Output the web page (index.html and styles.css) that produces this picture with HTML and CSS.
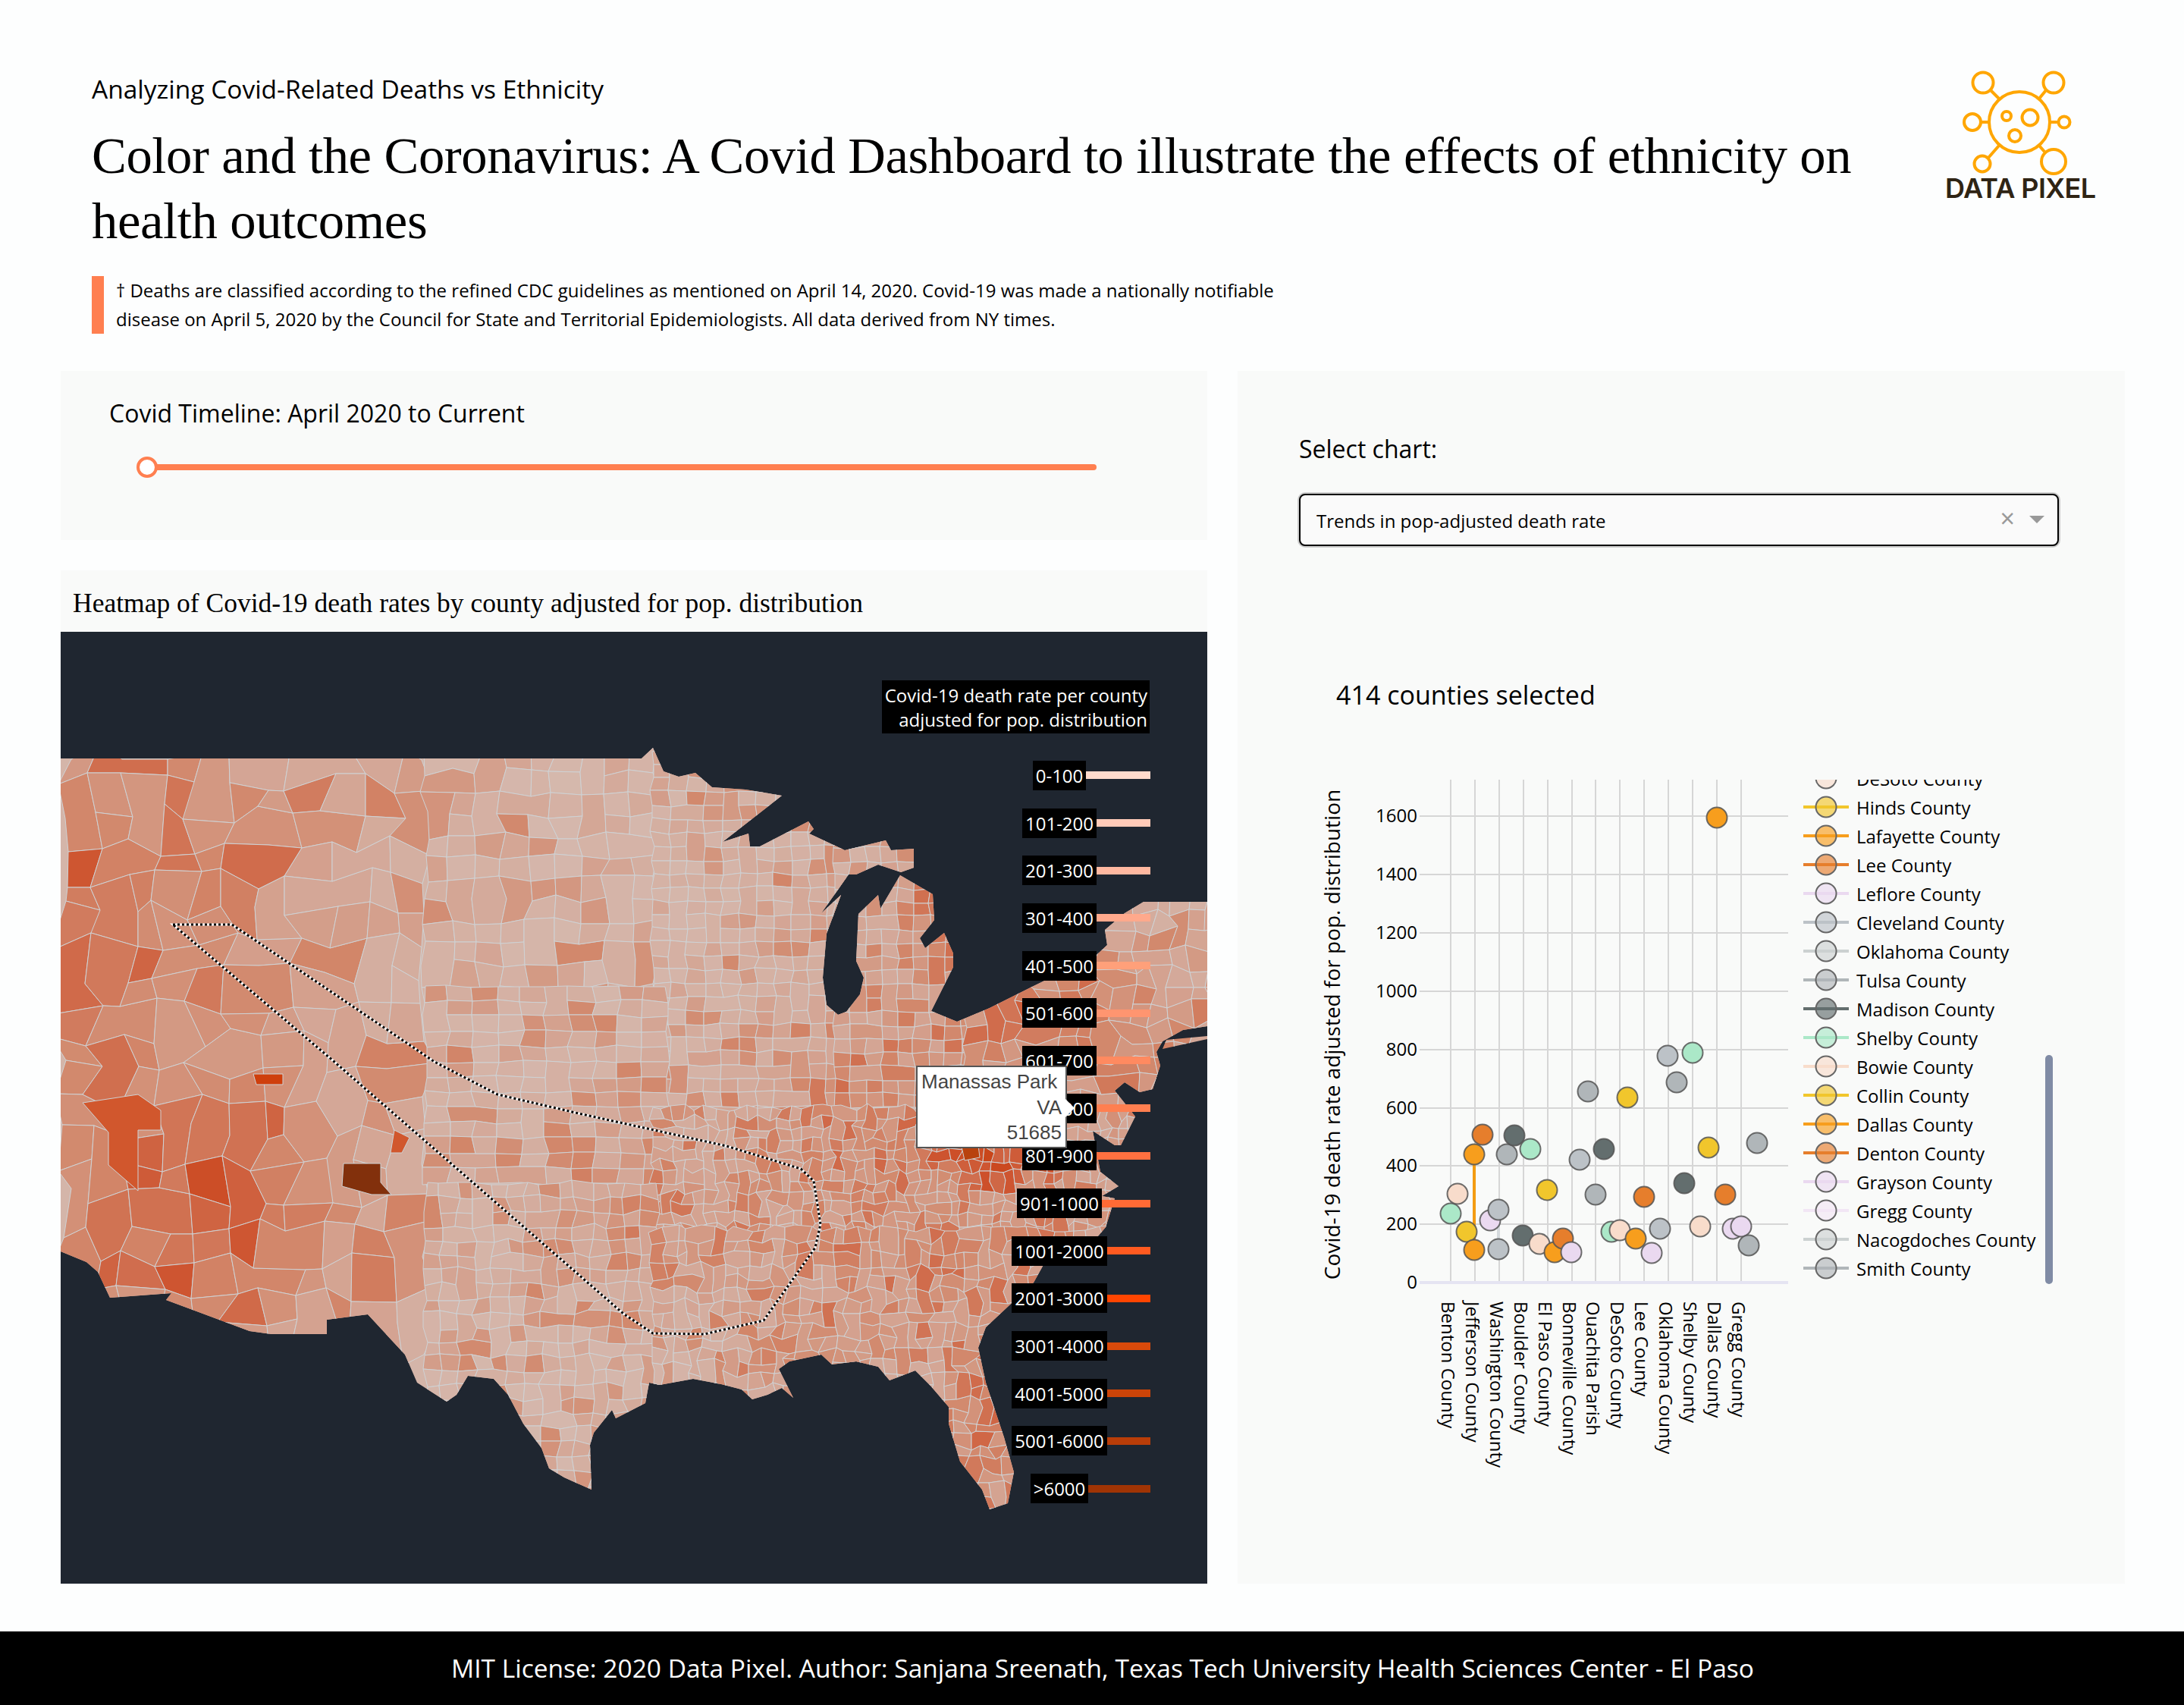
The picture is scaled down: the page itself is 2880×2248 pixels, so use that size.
FILE: index.html
```html
<!DOCTYPE html>
<html lang="en">
<head>
    <meta charset="UTF-8">
    <title>Color and the Coronavirus</title>
    <link rel="stylesheet" href="styles.css">
</head>
<body>
    <svg class="defs" width="0" height="0">
        <symbol id="sw" viewBox="0 0 60 38">
            <line x1="0" y1="19" x2="60" y2="19" stroke="currentColor" stroke-width="4"></line>
            <circle cx="30" cy="19" r="13.5" fill="currentColor" fill-opacity="0.65" stroke="#666" stroke-width="2"></circle>
        </symbol>
    </svg>

    <header class="top">
        <div class="top-text">
            <p class="subtitle">Analyzing Covid-Related Deaths vs Ethnicity</p>
            <h1 class="title">Color and the Coronavirus: A Covid Dashboard to illustrate the effects of ethnicity on health outcomes</h1>
            <p class="note">† Deaths are classified according to the refined CDC guidelines as mentioned on April 14, 2020. Covid-19 was made a nationally notifiable disease on April 5, 2020 by the Council for State and Territorial Epidemiologists. All data derived from NY times.</p>
        </div>
        <svg class="logo" viewBox="2560 90 210 190">
            <g fill="none" stroke="#ffa600" stroke-width="4">
                <circle cx="2663" cy="161" r="40"></circle>
                <circle cx="2615" cy="109" r="13.5"></circle>
                <circle cx="2708" cy="109" r="13.5"></circle>
                <circle cx="2601" cy="161" r="11"></circle>
                <circle cx="2722" cy="161" r="7.5"></circle>
                <circle cx="2614" cy="216" r="10.5"></circle>
                <circle cx="2708" cy="213" r="16"></circle>
                <circle cx="2646" cy="153" r="6"></circle>
                <circle cx="2677" cy="155" r="10.5"></circle>
                <circle cx="2657" cy="179" r="8"></circle>
                <path d="M2625 119 2636 130M2698 119 2689 130M2612 161H2623M2703 161H2714M2622 208 2636 192M2689 192 2696 200"></path>
            </g>
            <text class="logo-text" x="2565" y="261" textLength="199">DATA PIXEL</text>
        </svg>
    </header>

    <main class="panels">
        <div class="left">
            <section class="card timeline">
                <p class="timeline-label">Covid Timeline: April 2020 to Current</p>
                <div class="slider"><span class="slider-handle"></span></div>
            </section>
            <section class="map-card">
                <h3 class="map-title">Heatmap of Covid-19 death rates by county adjusted for pop. distribution</h3>
                <div class="map-body">
                    <svg id="us_map" class="map-svg" viewBox="80 833 1512 1255"></svg>

                    <div class="map-legend">
                        <p class="map-legend-title">Covid-19 death rate per county<br>adjusted for pop. distribution</p>
                        <div class="key"><span>0-100</span><i class="k1"></i></div>
                        <div class="key"><span>101-200</span><i class="k2"></i></div>
                        <div class="key"><span>201-300</span><i class="k3"></i></div>
                        <div class="key"><span>301-400</span><i class="k4"></i></div>
                        <div class="key"><span>401-500</span><i class="k5"></i></div>
                        <div class="key"><span>501-600</span><i class="k6"></i></div>
                        <div class="key"><span>601-700</span><i class="k7"></i></div>
                        <div class="key"><span>701-800</span><i class="k8"></i></div>
                        <div class="key"><span>801-900</span><i class="k9"></i></div>
                        <div class="key"><span>901-1000</span><i class="k10"></i></div>
                        <div class="key"><span>1001-2000</span><i class="k11"></i></div>
                        <div class="key"><span>2001-3000</span><i class="k12"></i></div>
                        <div class="key"><span>3001-4000</span><i class="k13"></i></div>
                        <div class="key"><span>4001-5000</span><i class="k14"></i></div>
                        <div class="key"><span>5001-6000</span><i class="k15"></i></div>
                        <div class="key"><span>&gt;6000</span><i class="k16"></i></div>
                    </div>

                    <div class="hover-tip">
                        <span class="tip-name">Manassas Park</span>
                        <span>VA</span>
                        <span>51685</span>
                    </div>
                </div>
            </section>
        </div>

        <section class="card right">
            <p class="select-label">Select chart:</p>
            <div class="dropdown">
                <span class="dropdown-value">Trends in pop-adjusted death rate</span>
                <span class="dropdown-clear">×</span>
                <span class="dropdown-arrow"></span>
            </div>
            <p class="count">414 counties selected</p>

            <div class="chart">
                <svg class="plot" viewBox="1730 1028 640 922">
                    <g class="grid">
                        <path d="M1872 1076H2358M1872 1153H2358M1872 1230H2358M1872 1307H2358M1872 1384H2358M1872 1461H2358M1872 1537H2358M1872 1614H2358"></path>
                        <path d="M1913 1028V1691M1945 1028V1691M1977 1028V1691M2009 1028V1691M2041 1028V1691M2073 1028V1691M2104 1028V1691M2136 1028V1691M2168 1028V1691M2200 1028V1691M2232 1028V1691M2264 1028V1691M2296 1028V1691"></path>
                    </g>
                    <line class="zero-line" x1="1872" y1="1691" x2="2358" y2="1691"></line>

                    <g class="ticks">
                        <text x="1869" y="1084">1600</text>
                        <text x="1869" y="1161">1400</text>
                        <text x="1869" y="1238">1200</text>
                        <text x="1869" y="1315">1000</text>
                        <text x="1869" y="1392">800</text>
                        <text x="1869" y="1469">600</text>
                        <text x="1869" y="1545">400</text>
                        <text x="1869" y="1622">200</text>
                        <text x="1869" y="1699">0</text>
                    </g>
                    <text class="y-title" transform="translate(1767 1364) rotate(-90)">Covid-19 death rate adjusted for pop. distribution</text>

                    <g class="x-labels">
                        <text transform="translate(1901 1716) rotate(90)">Benton County</text>
                        <text transform="translate(1933 1716) rotate(90)">Jefferson County</text>
                        <text transform="translate(1965 1716) rotate(90)">Washington County</text>
                        <text transform="translate(1997 1716) rotate(90)">Boulder County</text>
                        <text transform="translate(2029 1716) rotate(90)">El Paso County</text>
                        <text transform="translate(2061 1716) rotate(90)">Bonneville County</text>
                        <text transform="translate(2092 1716) rotate(90)">Ouachita Parish</text>
                        <text transform="translate(2124 1716) rotate(90)">DeSoto County</text>
                        <text transform="translate(2156 1716) rotate(90)">Lee County</text>
                        <text transform="translate(2188 1716) rotate(90)">Oklahoma County</text>
                        <text transform="translate(2220 1716) rotate(90)">Shelby County</text>
                        <text transform="translate(2252 1716) rotate(90)">Dallas County</text>
                        <text transform="translate(2284 1716) rotate(90)">Gregg County</text>
                    </g>

                    <line class="trace-orange" x1="1944" y1="1522" x2="1944" y2="1648"></line>
                    <line class="trace-grey" x1="1976" y1="1595" x2="1976" y2="1647"></line>
                    <g id="plot_points" class="points"></g>
                </svg>

                <ul class="legend">
                    <li><svg class="sw peach"><use href="#sw"></use></svg>DeSoto County</li>
                    <li><svg class="sw yellow"><use href="#sw"></use></svg>Hinds County</li>
                    <li><svg class="sw orange"><use href="#sw"></use></svg>Lafayette County</li>
                    <li><svg class="sw burnt"><use href="#sw"></use></svg>Lee County</li>
                    <li><svg class="sw lavender"><use href="#sw"></use></svg>Leflore County</li>
                    <li><svg class="sw steel"><use href="#sw"></use></svg>Cleveland County</li>
                    <li><svg class="sw pale"><use href="#sw"></use></svg>Oklahoma County</li>
                    <li><svg class="sw grey"><use href="#sw"></use></svg>Tulsa County</li>
                    <li><svg class="sw slate"><use href="#sw"></use></svg>Madison County</li>
                    <li><svg class="sw mint"><use href="#sw"></use></svg>Shelby County</li>
                    <li><svg class="sw peach"><use href="#sw"></use></svg>Bowie County</li>
                    <li><svg class="sw yellow"><use href="#sw"></use></svg>Collin County</li>
                    <li><svg class="sw orange"><use href="#sw"></use></svg>Dallas County</li>
                    <li><svg class="sw burnt"><use href="#sw"></use></svg>Denton County</li>
                    <li><svg class="sw lavender"><use href="#sw"></use></svg>Grayson County</li>
                    <li><svg class="sw lilac"><use href="#sw"></use></svg>Gregg County</li>
                    <li><svg class="sw pale"><use href="#sw"></use></svg>Nacogdoches County</li>
                    <li><svg class="sw grey"><use href="#sw"></use></svg>Smith County</li>
                </ul>
                <div class="legend-scroll"></div>
            </div>
        </section>
    </main>

    <footer class="foot">MIT License: 2020 Data Pixel. Author: Sanjana Sreenath, Texas Tech University Health Sciences Center - El Paso</footer>

    <script src="map.js"></script>
</body>
</html>
```

FILE: styles.css
```css
* {
    padding: 0;
    margin: 0;
    box-sizing: border-box;
}

body {
    width: 2880px;
    height: 2248px;
    overflow: hidden;
    background: #fdfefe;
    color: #000;
    font-family: "Open Sans", "Liberation Sans", sans-serif;
}

.defs {
    position: absolute;
}

/* header */
.top {
    height: 489px;
    display: flex;
    justify-content: space-between;
    padding: 90px 110px 0 121px;
}

.top-text {
    width: 2340px;
}

.subtitle {
    font-size: 33.5px;
    line-height: 54px;
}

.title {
    margin-top: 18px;
    font-family: "Liberation Serif", serif;
    font-size: 68.7px;
    font-weight: 400;
    line-height: 86px;
    letter-spacing: -0.4px;
}

.note {
    width: 1578px;
    margin-top: 30px;
    padding-left: 16px;
    border-left: 16px solid #ff7f50;
    font-size: 24px;
    line-height: 38px;
}

.logo {
    width: 210px;
    height: 190px;
}

.logo-text {
    font-family: "Inter", sans-serif;
    font-size: 36px;
    font-weight: 600;
    fill: #2f2414;
}

/* panels */
.panels {
    display: grid;
    grid-template-columns: 1512px 1170px;
    column-gap: 40px;
    height: 1599px;
    margin-left: 80px;
}

.card {
    background: #f9faf9;
}

.timeline {
    height: 223px;
    padding: 32px 0 0 64px;
}

.timeline-label {
    font-size: 32px;
    line-height: 48px;
}

.slider {
    position: relative;
    width: 1252px;
    height: 8px;
    margin: 43px 0 0 50px;
    background: #ff7f50;
    border-radius: 4px;
}

.slider-handle {
    position: absolute;
    left: -14px;
    top: -10px;
    width: 28px;
    height: 28px;
    background: #fff;
    border: 4px solid #ff7f50;
    border-radius: 50%;
}

.map-card {
    margin-top: 40px;
}

.map-title {
    height: 81px;
    padding-left: 16px;
    background: #f9faf9;
    font-family: "Liberation Serif", serif;
    font-size: 35.5px;
    font-weight: 400;
    line-height: 86px;
}

.map-body {
    position: relative;
    height: 1255px;
    background: #1f2630;
}

.map-svg {
    display: block;
    width: 1512px;
    height: 1255px;
}

.map-legend {
    position: absolute;
    left: 1197px;
    top: 64px;
    width: 240px;
    color: #fff;
    font-size: 24px;
}

.map-legend-title {
    width: 353px;
    height: 70px;
    margin: 0 0 24px -114px;
    padding: 4px 3px 0 0;
    background: #000;
    text-align: right;
    line-height: 32px;
}

.key {
    display: grid;
    grid-template-columns: 1fr auto 1fr;
    align-items: center;
    height: 62.7px;
}

.key span {
    grid-column: 2;
    padding: 0 4px;
    background: #000;
    line-height: 39px;
}

.key i {
    display: block;
    height: 10px;
}

.k1 { background: #ffdacc; }
.k2 { background: #ffcab8; }
.k3 { background: #ffb8a0; }
.k4 { background: #ffa98c; }
.k5 { background: #ffa07a; }
.k6 { background: #ff9570; }
.k7 { background: #ff8a60; }
.k8 { background: #ff7f50; }
.k9 { background: #ff7040; }
.k10 { background: #ff6a35; }
.k11 { background: #ff5a20; }
.k12 { background: #ff4500; }
.k13 { background: #d94a0b; }
.k14 { background: #cc4408; }
.k15 { background: #b93d08; }
.k16 { background: #a03404; }

.hover-tip {
    position: absolute;
    left: 1128px;
    top: 572px;
    display: flex;
    flex-direction: column;
    align-items: flex-end;
    width: 199px;
    height: 109px;
    padding: 3px 5px 0 5px;
    background: #fff;
    border: 2px solid #555;
    color: #444;
    font-family: "Liberation Sans", sans-serif;
    font-size: 26px;
    line-height: 33.5px;
}

.hover-tip::after {
    content: "";
    position: absolute;
    right: -12px;
    top: 42px;
    border-left: 12px solid #fff;
    border-top: 12px solid transparent;
    border-bottom: 12px solid transparent;
}

.tip-name {
    align-self: flex-start;
}

/* right panel */
.right {
    padding: 79px 0 0 81px;
}

.select-label {
    font-size: 32px;
    line-height: 48px;
}

.dropdown {
    display: flex;
    align-items: center;
    width: 1002px;
    height: 69px;
    margin-top: 35px;
    padding: 2px 17px 0 21px;
    border: 2px solid #000;
    border-radius: 8px;
    box-shadow: 0 0 0 2px #ccc;
    background: #fafafa;
    font-size: 24px;
}

.dropdown-value {
    flex: 1;
}

.dropdown-clear {
    margin: -8px 19px 0 0;
    color: #999;
    font-size: 34px;
}

.dropdown-arrow {
    margin-top: -4px;
    border-top: 10px solid #999;
    border-left: 10px solid transparent;
    border-right: 10px solid transparent;
}

.count {
    margin: 171px 0 0 49px;
    font-size: 34px;
    line-height: 50px;
}

.chart {
    display: flex;
    margin: 87px 0 0 17px;
    font-size: 24px;
}

.plot {
    width: 640px;
    height: 922px;
    flex: none;
}

.grid path {
    fill: none;
    stroke: #d6d6d6;
    stroke-width: 2;
}

.zero-line {
    stroke: #e5e4f2;
    stroke-width: 4;
}

.ticks text {
    font-size: 24px;
    text-anchor: end;
}

.y-title {
    font-size: 28px;
    text-anchor: middle;
}

.x-labels text {
    font-size: 24px;
}

.trace-orange {
    stroke: #f39c12;
    stroke-width: 4;
}

.trace-grey {
    stroke: #d5dadd;
    stroke-width: 4;
}

.points circle {
    fill: currentColor;
    stroke: #555;
    stroke-width: 2;
    stroke-opacity: 0.85;
}

.legend {
    display: flex;
    flex-direction: column;
    justify-content: flex-end;
    flex: none;
    width: 312px;
    height: 663px;
    margin-left: 8px;
    overflow: hidden;
    list-style: none;
}

.legend li {
    display: flex;
    align-items: center;
    flex: none;
    height: 38px;
    white-space: nowrap;
}

.sw {
    width: 60px;
    height: 38px;
    margin-right: 10px;
    flex: none;
}

.legend-scroll {
    width: 10px;
    height: 302px;
    margin: 363px 0 0 7px;
    background: #808ba5;
    border-radius: 5px;
}

.mint { color: #abe8c8; }
.peach { color: #f8dccb; }
.yellow { color: #f1c62c; }
.orange { color: #f79e1d; }
.burnt { color: #e67e2c; }
.lavender { color: #ead9f0; }
.lilac { color: #f2e6f5; }
.steel { color: #bcc2c7; }
.pale { color: #ccd1d1; }
.grey { color: #b0b6b9; }
.slate { color: #636e6e; }

/* footer */
.foot {
    height: 97px;
    margin-top: 63px;
    padding-left: 28px;
    background: #000;
    color: #fff;
    font-size: 33.5px;
    line-height: 97px;
    text-align: center;
}
```

FILE: map.js
```js
// county map is generated: a jittered grid per region, clipped to the outline
const outline = [
    [80,1000],[846,1000],[861,986],[875,1017],[895,1024],[917,1019],[939,1038],[983,1041],[1031,1049],
    [953,1110],[987,1099],[989,1116],[1002,1116],[1066,1083],[1073,1093],[1067,1099],[1114,1121],
    [1168,1108],[1175,1121],[1205,1119],[1205,1144],[1188,1150],[1158,1140],[1129,1153],[1119,1153],
    [1105,1173],[1083,1204],[1109,1180],[1090,1231],[1085,1289],[1090,1325],[1105,1338],[1116,1334],
    [1134,1311],[1139,1289],[1129,1267],[1132,1205],[1158,1180],[1161,1198],[1187,1154],[1230,1179],
    [1232,1213],[1213,1237],[1220,1250],[1245,1230],[1257,1257],[1257,1275],[1228,1333],[1262,1347],
    [1305,1329],[1363,1300],[1445,1260],[1460,1246],[1457,1226],[1483,1204],[1508,1189],[1592,1189],
    [1592,1353],[1560,1358],[1533,1373],[1525,1387],[1530,1405],[1520,1436],[1503,1440],[1483,1427],
    [1470,1438],[1497,1472],[1478,1510],[1470,1510],[1441,1491],[1451,1545],[1475,1564],[1453,1577],
    [1470,1580],[1458,1618],[1446,1632],[1378,1664],[1363,1691],[1300,1750],[1290,1777],[1300,1823],
    [1324,1895],[1337,1941],[1329,1982],[1305,1990],[1295,1964],[1266,1927],[1251,1877],[1251,1855],
    [1227,1827],[1207,1807],[1173,1820],[1158,1802],[1129,1795],[1097,1799],[1083,1786],[1041,1795],
    [1027,1805],[1046,1843],[1031,1830],[1012,1839],[992,1845],[978,1832],[951,1825],[914,1818],
    [870,1826],[856,1823],[851,1850],[812,1870],[807,1859],[783,1889],[778,1905],[780,1964],[744,1948],
    [724,1936],[714,1909],[690,1877],[670,1839],[651,1818],[617,1814],[602,1839],[589,1848],[550,1823],
    [534,1786],[485,1733],[431,1740],[431,1759],[358,1759],[329,1755],[219,1714],[226,1705],[145,1711],
    [129,1677],[114,1664],[80,1650]
];
const longIsland = [[1538,1371],[1592,1366],[1592,1370],[1533,1383]];

const lasso = [
    [228,1219],[306,1219],[573,1400],[656,1443],[763,1468],[958,1511],[1056,1541],[1073,1557],[1082,1614],
    [1075,1645],[1007,1741],[929,1759],[861,1758],[822,1732],[597,1536],[441,1400]
];

// x0, x1, y0, y1, cell width, cell height, jitter, chance to merge with a neighbour
const regions = [
    [80, 560, 990, 1780, 44, 42, 0.34, 0.4],
    [560, 860, 990, 1300, 34, 28, 0.2, 0.25],
    [860, 1100, 990, 1460, 23, 18, 0.12, 0.1],
    [1100, 1270, 1100, 1460, 21, 18, 0.12, 0.1],
    [1270, 1600, 1180, 1460, 25, 24, 0.34, 0.35],
    [560, 860, 1300, 1560, 32, 20, 0.12, 0.1],
    [860, 1600, 1460, 1620, 14, 14, 0.34, 0.45],
    [560, 860, 1560, 1980, 22, 19, 0.2, 0.15],
    [860, 1600, 1620, 2000, 16, 16, 0.34, 0.4]
];

// hot spots of the colour field: x, y, spread x, spread y, weight
const hotspots = [
    [280, 1610, 130, 110, 0.34], [130, 1130, 110, 110, 0.18], [400, 1060, 80, 60, 0.08],
    [1310, 1525, 50, 18, 0.66], [1470, 1340, 70, 50, 0.2], [1235, 1200, 40, 60, 0.16],
    [1340, 1330, 60, 50, 0.14], [1190, 1640, 120, 80, 0.1], [860, 1600, 100, 80, 0.16],
    [1060, 1790, 60, 40, 0.18], [1300, 1880, 40, 90, 0.22], [1130, 1470, 70, 60, 0.14],
    [90, 1300, 60, 160, 0.18],
    // broad washes: the west and the east sit well above the plains
    [230, 1350, 210, 330, 0.22], [1320, 1520, 260, 300, 0.18]
];

const ramp = [[213,187,177],[212,165,148],[210,136,108],[208,108,76],[205,80,42],[200,66,20]];

let seed = 20200414;
function rnd() {
    seed = (seed * 1664525 + 1013904223) % 4294967296;
    return seed / 4294967296;
}

function shade(x, y) {
    let t = 0.05;
    hotspots.forEach(function(h) {
        let dx = (x - h[0]) / h[2];
        let dy = (y - h[1]) / h[3];
        t += h[4] * Math.exp(-(dx * dx + dy * dy) / 2);
    });
    t += Math.pow(rnd(), 2.5) * 0.36 - 0.03;
    t = Math.max(0, Math.min(0.999, t)) * (ramp.length - 1);
    let i = Math.floor(t);
    let f = t - i;
    let c = ramp[i].map(function(v, k) { return Math.round(v + (ramp[i + 1][k] - v) * f); });
    return `rgb(${c[0]},${c[1]},${c[2]})`;
}

function points(list) {
    return list.map(function(p) { return p[0] + ',' + p[1]; }).join(' ');
}

function county(cells) {
    let tmp = '';
    cells.forEach(function(r) {
        let cols = Math.ceil((r[1] - r[0]) / r[4]);
        let rows = Math.ceil((r[3] - r[2]) / r[5]);
        let v = [];
        let used = {};
        for (let i = 0; i <= cols; i++) {
            v[i] = [];
            for (let j = 0; j <= rows; j++) {
                v[i][j] = [
                    Math.round(r[0] + i * r[4] + (rnd() - 0.5) * 2 * r[6] * r[4]),
                    Math.round(r[2] + j * r[5] + (rnd() - 0.5) * 2 * r[6] * r[5])
                ];
            }
        }
        for (let i = 0; i < cols; i++) {
            for (let j = 0; j < rows; j++) {
                if (used[i + '_' + j]) continue;
                let shape = [v[i][j], v[i + 1][j], v[i + 1][j + 1], v[i][j + 1]];
                let roll = rnd();
                // merged cells keep the grid from looking like a grid
                if (roll < r[7] / 2 && i + 1 < cols && !used[(i + 1) + '_' + j]) {
                    shape = [v[i][j], v[i + 1][j], v[i + 2][j], v[i + 2][j + 1], v[i + 1][j + 1], v[i][j + 1]];
                    used[(i + 1) + '_' + j] = true;
                } else if (roll < r[7] && j + 1 < rows) {
                    shape = [v[i][j], v[i + 1][j], v[i + 1][j + 1], v[i + 1][j + 2], v[i][j + 2], v[i][j + 1]];
                    used[i + '_' + (j + 1)] = true;
                }
                let cx = r[0] + (i + 0.5) * r[4];
                let cy = r[2] + (j + 0.5) * r[5];
                tmp += `<polygon points="${points(shape)}" fill="${shade(cx, cy)}"/>`;
            }
        }
    });
    return tmp;
}

function drawMap() {
    let land = points(outline);
    let html = `<defs><clipPath id="land"><polygon points="${land}"/><polygon points="${points(longIsland)}"/></clipPath></defs>`;
    html += `<polygon points="${land}" fill="#d4b5a9"/>`;
    html += `<g clip-path="url(#land)" stroke="#cfd2d4" stroke-width="1">${county(regions)}`;
    // the few counties that stand out
    html += '<polygon fill="#d1572d" points="109,1454 182,1443 212,1464 212,1490 182,1490 182,1570 143,1536 143,1493"/>';
    html += '<polygon fill="#cf3f0c" points="334,1416 373,1416 373,1430 338,1430"/>';
    html += '<polygon fill="#82300c" points="453,1534 502,1534 502,1559 516,1575 490,1575 451,1564"/>';
    html += '<polygon fill="#b8420e" points="1268,1512 1290,1510 1292,1526 1272,1530"/>';
    html += '<polygon fill="#d1572d" points="520,1490 540,1500 530,1520 515,1520"/>';
    html += '</g>';
    html += `<polygon points="${points(lasso)}" fill="none" stroke="#fff" stroke-width="3"/>`;
    html += `<polygon points="${points(lasso)}" fill="none" stroke="#000" stroke-width="3" stroke-dasharray="3 3"/>`;
    document.querySelector('#us_map').innerHTML = html;
}

const scatter = [
    ['mint',1913,1600],['peach',1922,1574],['yellow',1934,1624],['orange',1944,1522],['orange',1944,1648],
    ['burnt',1955,1496],['lavender',1965,1609],['steel',1976,1595],['steel',1976,1647],['grey',1987,1522],
    ['slate',1997,1497],['slate',2008,1629],['mint',2018,1515],['peach',2030,1640],['yellow',2040,1569],
    ['orange',2050,1651],['burnt',2061,1633],['lavender',2072,1651],['steel',2083,1529],['grey',2094,1439],
    ['grey',2104,1575],['slate',2115,1515],['mint',2125,1624],['peach',2136,1622],['yellow',2146,1447],
    ['orange',2157,1633],['burnt',2168,1578],['lavender',2178,1652],['steel',2189,1620],['steel',2199,1392],
    ['grey',2211,1427],['slate',2221,1560],['mint',2232,1388],['peach',2242,1617],['yellow',2253,1513],
    ['orange',2264,1078],['burnt',2275,1575],['lavender',2285,1620],['lavender',2296,1617],['grey',2306,1642],
    ['grey',2317,1507]
];

function drawPoints() {
    let tmp = '';
    scatter.forEach(function(p) {
        tmp += `<circle class="${p[0]}" cx="${p[1]}" cy="${p[2]}" r="13.5"/>`;
    });
    document.querySelector('#plot_points').innerHTML = tmp;
}

drawMap();
drawPoints();
```
